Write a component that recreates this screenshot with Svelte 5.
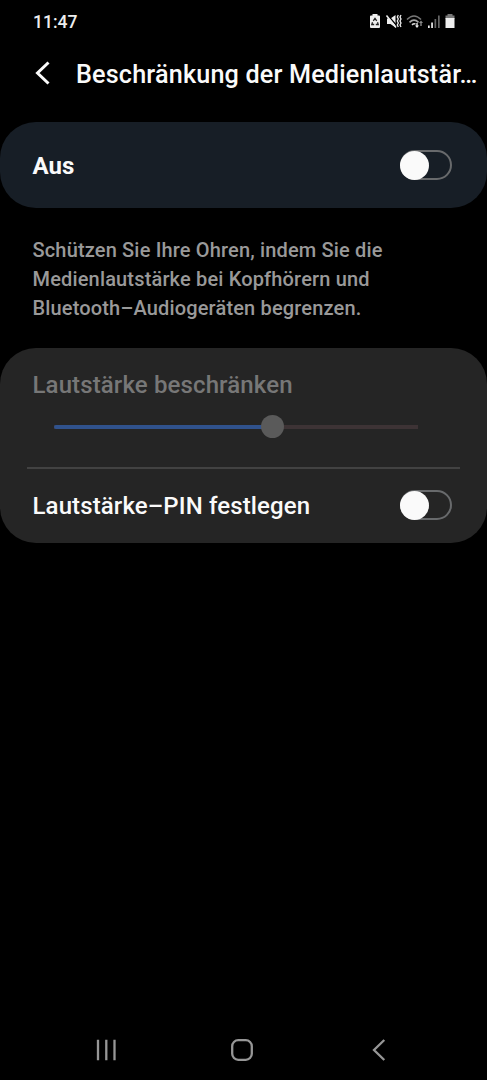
<script lang="ts">
  let limitEnabled = $state(false);
  let pinEnabled = $state(false);
  const volume = 60;
</script>

{#snippet toggle(checked: boolean, label: string, onchange: () => void)}
  <button
    class="switch"
    class:on={checked}
    role="switch"
    aria-checked={checked}
    aria-label={label}
    onclick={onchange}>
    <span class="knob"></span>
  </button>
{/snippet}

<div class="screen">
  <div class="status">
    <span class="time">11:47</span>
    <svg class="status-icons" width="90" height="20" viewBox="0 0 90 20">
      <!-- battery saver -->
      <path fill="#eee" d="M1 3.500Q1 2.500 2 2.500h1.500V1h5v1.500H10q1 0 1 1V14q0 1-1 1H2q-1 0-1-1z" />
      <path fill="none" stroke="#222" stroke-width="1.300" d="M4.300 7.800 6 5.300l1.700 2.500M8.500 9.300l.7 2.200H6.800M5.200 11.500H2.800l.7-2.200" />
      <!-- muted, vibrate -->
      <path fill="#eee" d="M18 5.500h3.500L26.500 2v12.500L21.500 11H18z" />
      <path fill="none" stroke="#000" stroke-width="1.300" d="m19 2.500 9 10.500" />
      <path fill="none" stroke="#eee" stroke-width="1.500" d="m17.500 2.500 9.500 12" />
      <path fill="none" stroke="#eee" stroke-width="1.300" d="m29.300 2-1 2 1 2-1 2 1 2-1 2 1 2M32 2l-1 2 1 2-1 2 1 2-1 2 1 2" />
      <!-- wifi -->
      <g fill="none" stroke-width="1.600">
        <path stroke="#777" d="M38 6.500q7-7 14 0" />
        <path stroke="#aaa" d="M40.500 9.300q4.500-4.300 9 0" />
        <path stroke="#ddd" d="M43 11.900q1.800-1.700 3.500-.8" />
      </g>
      <path fill="#eee" d="M47.300 10h1.400v2.500H50L48 15l-2-2.500h1.300z" />
      <path fill="#888" d="M51.300 13V10H50l2-2.500L54 10h-1.300v3z" />
      <!-- signal -->
      <path fill="#eee" d="M59 12.500h1.700V15H59zM62.200 9.500h1.700V15h-1.700z" />
      <path fill="#666" d="M65.500 6h1.700v9h-1.700zM69 2.500h1.700V15H69z" />
      <!-- battery -->
      <path fill="#777" d="M76.500 2.500h2V1h5v1.500h2V6h-9z" />
      <path fill="#eee" d="M76.500 5h9v10h-9z" />
    </svg>
  </div>

  <header>
    <button class="back" aria-label="Zurück">
      <svg width="16" height="24" viewBox="0 0 16 24">
        <path d="M14.500 1.500 3.500 12l11 10.500" />
      </svg>
    </button>
    <h1>Beschränkung der Medienlautstär…</h1>
  </header>

  <section class="card master">
    <span class="state">{limitEnabled ? "An" : "Aus"}</span>
    {@render toggle(limitEnabled, "Medienlautstärke", () => (limitEnabled = !limitEnabled))}
  </section>

  <p>
    Schützen Sie Ihre Ohren, indem Sie die<br />
    Medienlautstärke bei Kopfhörern und<br />
    Bluetooth–Audiogeräten begrenzen.
  </p>

  <section class="card options">
    <div class="label">Lautstärke beschränken</div>
    <div class="slider">
      <div class="fill" style="width: {volume}%"></div>
      <div class="thumb"></div>
    </div>
    <div class="pin">
      <span>Lautstärke–PIN festlegen</span>
      {@render toggle(pinEnabled, "PIN", () => (pinEnabled = !pinEnabled))}
    </div>
  </section>

  <nav>
    <svg width="22" height="22" viewBox="0 0 22 22">
      <path d="M2 .8v20.400M10.300 .8v20.400M18.500 .8v20.400" />
    </svg>
    <svg class="home" width="22" height="22" viewBox="0 0 22 22">
      <rect x="1.200" y="1.200" width="19.600" height="19.600" rx="6" />
    </svg>
    <svg width="14" height="22" viewBox="0 0 14 22">
      <path d="M12.300 1 2 11l10.300 10" />
    </svg>
  </nav>
</div>

<style>
  :global(body) {
    background: #000;
  }
  .screen {
    box-sizing: border-box;
    display: flex;
    flex-direction: column;
    width: 487px;
    height: 1080px;
    overflow: hidden;
    background: #000;
    color: #fafafa;
    font-family: Roboto, sans-serif;
    font-weight: 500;
  }
  button {
    padding: 0;
    border: none;
    background: none;
  }
  svg {
    display: block;
  }
  .status {
    display: flex;
    justify-content: space-between;
    height: 44px;
    padding: 0 27px 0 33px;
  }
  .time {
    color: #eee;
    font-size: 17.5px;
    line-height: 44px;
  }
  .status-icons {
    margin-top: 13px;
    margin-right: 1px;
  }
  header {
    display: flex;
    align-items: center;
    height: 60px;
    padding: 0 5px 0 34px;
  }
  .back {
    flex: none;
    width: 42px;
    margin-top: -2px;
  }
  .back path {
    fill: none;
    stroke: #fafafa;
    stroke-width: 3;
  }
  h1 {
    flex: 1;
    margin: 2px 0 0;
    font-size: 25.2px;
    font-weight: 500;
    letter-spacing: 0.17px;
    line-height: 36px;
    white-space: nowrap;
  }
  .card {
    box-sizing: border-box;
    flex: none;
    border-radius: 36px;
  }
  .master {
    display: flex;
    align-items: center;
    justify-content: space-between;
    height: 86px;
    margin-top: 18px;
    padding: 0 35.5px 0 32.5px;
    background: #171e26;
  }
  .state {
    padding-top: 2px;
    font-size: 24px;
    font-weight: 700;
  }
  .switch {
    box-sizing: border-box;
    display: flex;
    align-items: center;
    width: 52px;
    height: 30px;
    border: 2px solid #686a6c;
    border-radius: 15px;
  }
  .switch.on {
    justify-content: flex-end;
    background: #3b78dc;
  }
  .knob {
    flex: none;
    width: 29px;
    height: 29px;
    margin: 0 -2px;
    border-radius: 50%;
    background: #fafafa;
  }
  p {
    margin: 28px 0 0 32.5px;
    color: #999;
    font-size: 20px;
    letter-spacing: 0.16px;
    line-height: 29px;
    white-space: nowrap;
  }
  .options {
    height: 195px;
    margin-top: 25px;
    padding: 21px 27px 0;
    background: #252525;
    font-size: 24px;
    letter-spacing: 0.12px;
  }
  .label {
    padding-left: 5.5px;
    color: #777;
    line-height: 32px;
  }
  .slider {
    display: flex;
    align-items: center;
    height: 23px;
    margin: 14px 42px 29px 27px;
    background: linear-gradient(#3d3335, #3d3335) center / 100% 4px no-repeat;
  }
  .fill {
    height: 4px;
    border-radius: 2px 0 0 2px;
    background: #30528c;
  }
  .thumb {
    flex: none;
    width: 23px;
    height: 23px;
    margin-left: -11px;
    border-radius: 50%;
    background: #5a5a5a;
  }
  .pin {
    display: flex;
    align-items: center;
    justify-content: space-between;
    height: 73px;
    padding: 0 8.5px 0 5.5px;
    border-top: 2px solid #424242;
  }
  .pin .switch {
    margin-bottom: 1px;
  }
  nav {
    display: flex;
    align-items: center;
    justify-content: space-between;
    height: 61px;
    margin-top: auto;
    padding: 0 101px 0 95.5px;
  }
  nav svg {
    fill: none;
    stroke: #969696;
    stroke-width: 2.300;
  }
  .home {
    margin-right: 6px;
  }
</style>
